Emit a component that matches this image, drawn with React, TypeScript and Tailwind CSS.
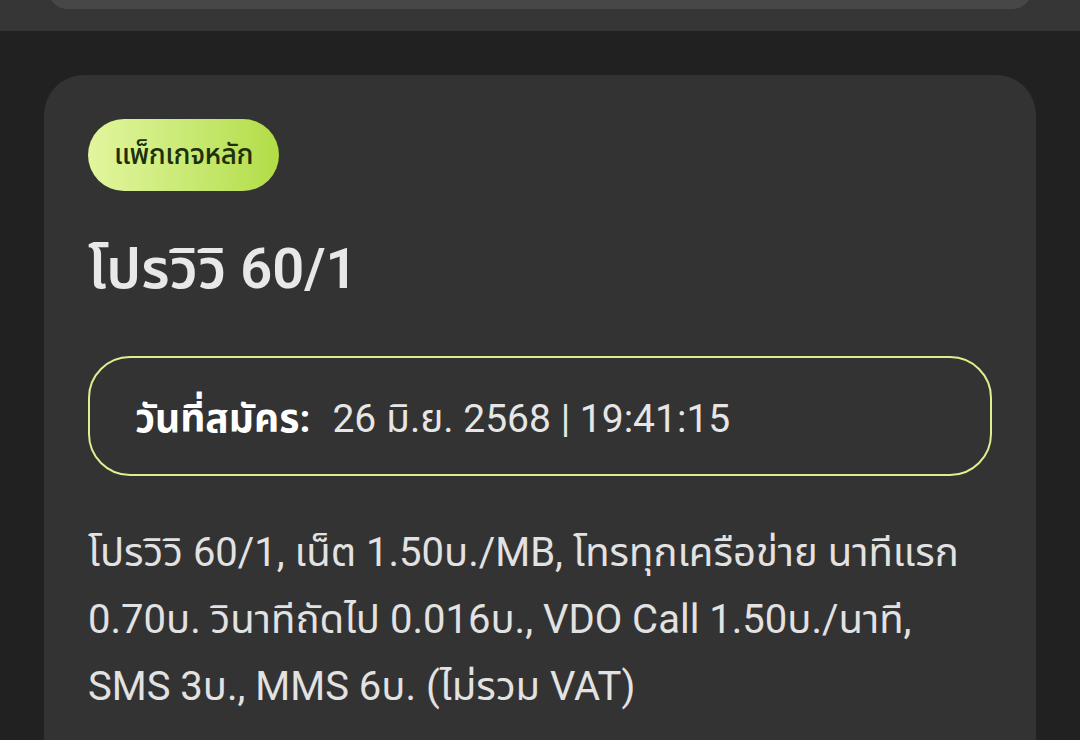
import React from 'react';

const font = { fontFamily: 'Roboto, "Noto Sans", "Noto Sans Thai", sans-serif' };

export default function App() {
  return (
    <div className="min-h-[740px] bg-[#212121] overflow-hidden" style={font}>
      {/* previous section, scrolled off the top */}
      <div className="h-[31px] overflow-hidden bg-[#363636]">
        <div className="-mt-[31px] mx-[48px] h-[40px] rounded-[30px] bg-[#474747]" />
      </div>

      {/* package card */}
      <div className="mt-[44px] mx-[44px] rounded-t-[40px] bg-[#333333] px-[44px] pt-[44px] pb-[40px]">
        <span className="inline-flex h-[72px] items-center rounded-full bg-gradient-to-r from-[#e2f69e] to-[#b2dd45] px-[26px] text-[28px] font-medium tracking-[-0.5px] text-[#1d3009]">
          แพ็กเกจหลัก
        </span>

        <h1 className="mt-[40px] text-[56px] font-semibold leading-[76px] text-[#e8e8e8]">
          โปรวิวิ 60/1
        </h1>

        <div className="mt-[49px] flex h-[120px] items-center rounded-[42px] border-2 border-[#dcf08f] px-[45px] pt-[6px] text-[39px]">
          <span className="font-bold text-white">วันที่สมัคร:</span>
          <span className="ml-[22px] text-[#e6e6e6]">26 มิ.ย. 2568 | 19:41:15</span>
        </div>

        <p className="mt-[43px] max-w-[890px] text-[40px] leading-[67px] text-[#e2e2e2]">
          โปรวิวิ 60/1, เน็ต 1.50บ./MB, โทรทุกเครือข่าย นาทีแรก 0.70บ. วินาทีถัดไป 0.016บ., VDO Call 1.50บ./นาที, SMS 3บ., MMS 6บ. (ไม่รวม VAT)
        </p>
      </div>
    </div>
  );
}
